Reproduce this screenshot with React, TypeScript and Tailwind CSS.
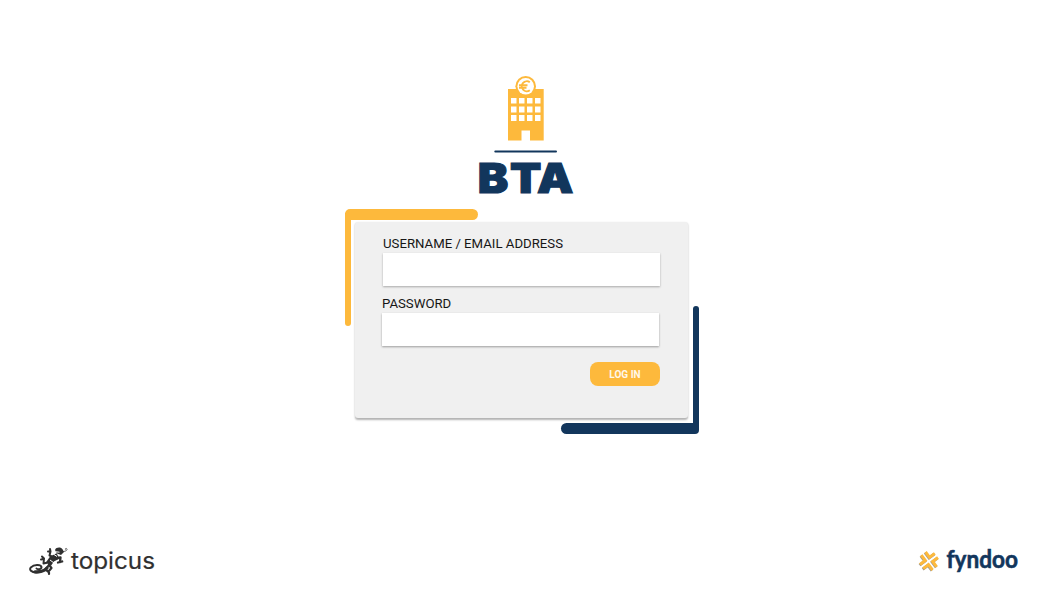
function BuildingLogo() {
  return (
    <svg width="96" height="122" viewBox="478 74 96 122" role="img" aria-label="BTA" className="overflow-visible">
      <path fill="#fdb93c" fillRule="evenodd" d="M508 89H543.700V140.500H530V130.500H521.500V140.500H508ZM511 98v5.500h5.500V98ZM519 98v5.500h5.500V98ZM527 98v5.500h5.500V98ZM535 98v5.500h5.500V98ZM511 106.500v6h5.500v-6ZM519 106.500v6h5.500v-6ZM527 106.500v6h5.500v-6ZM535 106.500v6h5.500v-6ZM511 115v6h5.500v-6ZM519 115v6h5.500v-6ZM527 115v6h5.500v-6ZM535 115v6h5.500v-6Z" />
      <circle cx="525.7" cy="86.300" r="10.300" fill="#fdb93c" />
      <circle cx="525.7" cy="86.300" r="8.300" fill="#fff" />
      <path d="M529.800 82.300a5 5 0 1 0 0 8M519 85.200h8.500M519 87.700h7.500" fill="none" stroke="#fdb93c" strokeWidth="1.900" />
      <path d="M495.300 151.600H556" stroke="#12365c" strokeWidth="2" strokeLinecap="round" />
      <text x="434.300 463.700 488.200" y="192.700" transform="scale(1.1 1)" fill="#12365c" stroke="#12365c" strokeWidth="1.200" className="font-['Inter'] text-[41.500px] font-black">BTA</text>
    </svg>
  );
}

function TopicusLogo() {
  return (
    <svg width="130" height="36" viewBox="27 542 130 36" role="img" aria-label="topicus" className="overflow-visible">
      <g fill="none" stroke="#303030" strokeLinecap="round" strokeLinejoin="round">
        <path d="M50 563C48 567 44 572.300 37 572.400C31 572.600 28.700 569.500 31 567.300C34 564 41.500 564.500 41.500 567.300C41.500 569.300 37.500 569.800 36.500 568.500" strokeWidth="2" />
        <path d="M47 568C45 570.500 41 572 35 571.800" strokeWidth="3.200" />
        <path d="M48.500 564L52 559L58 556" strokeWidth="6" strokeLinecap="butt" />
        <path d="M48 562.500L43.500 563.500L44 558.500L42 556.500M41 559.500L43.500 559" strokeWidth="2" />
        <path d="M49.500 565.500L51.500 568L48.500 571.500M46 570L49 572.500L49 574" strokeWidth="2.200" />
        <path d="M53 557L49.500 555.500L50.500 551.500M48 551.500L50.500 551.500L50 549" strokeWidth="2" />
        <path d="M57 558L60.500 557.500L60 562M58 562.500L60 562L62.200 561.500" strokeWidth="2.300" />
        <path d="M62 551.500C65 551.800 67.500 550.500 67 549C66.500 547.800 64.500 548.500 65.500 549.500" strokeWidth="0.900" stroke="#555" />
      </g>
      <path d="M55 550C56 547 61 546.800 62.500 549.200L64 552L61 555L57 553.500Z" fill="#303030" />
      <path d="M56 551.800L59.500 552.200M50 560L54 563M54 554.500L57 556.500" stroke="#fff" strokeWidth="1" />
      <text x="71" y="569.300" textLength="84" lengthAdjust="spacingAndGlyphs" fill="#303030" stroke="#303030" strokeWidth="0.200" className="font-['Inter'] text-[22.500px] font-normal">topicus</text>
    </svg>
  );
}

function FyndooLogo() {
  return (
    <svg width="104" height="32" viewBox="916 544 104 32" role="img" aria-label="fyndoo" className="overflow-visible">
      <g fill="none" strokeWidth="3" strokeLinejoin="miter">
        <g stroke="#a39b8d" transform="translate(-0.500 0.600) rotate(8 929 561)">
          <path d="M924.300 552.600L929 557.300L933.700 552.600M937.400 556.300L932.700 561L937.400 565.700M933.700 569.400L929 564.700L924.300 569.400M920.600 565.700L925.300 561L920.600 556.300" />
        </g>
        <g stroke="#fdb93c" transform="rotate(8 929 561)">
          <path d="M924.300 552.600L929 557.300L933.700 552.600M937.400 556.300L932.700 561L937.400 565.700M933.700 569.400L929 564.700L924.300 569.400M920.600 565.700L925.300 561L920.600 556.300" />
        </g>
      </g>
      <text x="946.500" y="568" textLength="71.500" lengthAdjust="spacingAndGlyphs" fill="#12365c" stroke="#12365c" strokeWidth="0.600" className="font-['Lato'] text-[25px] font-bold">fyndoo</text>
    </svg>
  );
}

function LoginForm() {
  return (
    <div className="grid h-[225px] w-[354px] *:col-start-1 *:row-start-1">
      <div className="mt-[4px] h-[113px] w-[5.500px] rounded-b-[3px] bg-[#fdb93c]" />
      <div className="h-[11px] w-[133px] rounded-l-[5px] rounded-r-[5.500px] rounded-bl-none bg-[#fdb93c]" />
      <div className="mb-[4px] h-[124px] w-[6px] self-end justify-self-end rounded-t-[3px] bg-[#12365c]" />
      <div className="h-[11px] w-[138px] self-end justify-self-end rounded-l-[5.500px] rounded-br-[4px] bg-[#12365c]" />
      <form
        className="mt-[13px] ml-[10px] flex h-[196px] w-[333px] flex-col rounded-[3px] bg-[#f0f0f0] pt-[14px] pr-[28px] pl-[27px] font-['Roboto',sans-serif] text-[13.200px] leading-[16px] text-[#161616] shadow-[0_1.5px_2px_rgba(0,0,0,0.3)]"
        onSubmit={(e) => e.preventDefault()}
      >
        <label htmlFor="user" className="ml-px">USERNAME / EMAIL ADDRESS</label>
        <input id="user" className="mt-px ml-px h-[33px] w-[277px] bg-white px-2 shadow-[0_1px_2px_rgba(0,0,0,0.3)] outline-none" />
        <label htmlFor="password" className="mt-[10px]">PASSWORD</label>
        <input id="password" type="password" className="mt-px h-[33px] w-[277px] bg-white px-2 shadow-[0_1px_2px_rgba(0,0,0,0.35)] outline-none" />
        <button className="mt-[16px] h-[24px] w-[70px] self-end rounded-[8px] bg-[#fdb93c] pt-[2px] text-[10px] font-bold text-[#fff7ea]">LOG IN</button>
      </form>
    </div>
  );
}

export default function App() {
  return (
    <div className="flex h-[592px] w-[1053px] flex-col overflow-hidden bg-white">
      <main className="flex flex-col items-start pt-[74px]">
        <div className="ml-[478px] h-[122px]"><BuildingLogo /></div>
        <div className="mt-[13px] ml-[345px]"><LoginForm /></div>
      </main>
      <footer className="mt-auto flex items-end justify-between pr-[33px] pb-[14px] pl-[27px]">
        <TopicusLogo />
        <div className="pb-[2px]"><FyndooLogo /></div>
      </footer>
    </div>
  );
}
